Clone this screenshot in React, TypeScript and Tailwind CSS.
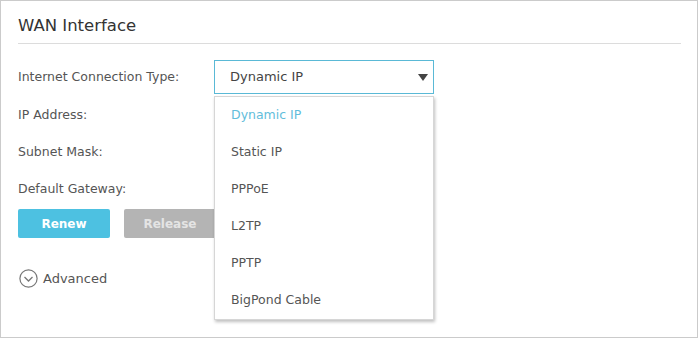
const options = ["Dynamic IP", "Static IP", "PPPoE", "L2TP", "PPTP", "BigPond Cable"];

const font = { fontFamily: '"DejaVu Sans", Verdana, sans-serif' };

export default function App() {
  return (
    <div
      className="relative w-[698px] h-[338px] bg-white border border-[#cbcbcb] overflow-hidden"
      style={font}
    >
      <div className="pl-[17px] pr-[16px]">
        <h1 className="pt-[15px] pb-[7px] text-[16.5px] leading-[20px] text-[#333]">WAN Interface</h1>
        <div className="h-px bg-[#dcdcdc]" />

        <div className="flex items-center mt-[16px] h-[34px]">
          <div className="w-[196px] text-[12.5px] text-[#555]">Internet Connection Type:</div>
          <div className="relative w-[220px] h-[34px] border border-[#5ab9d6] bg-white flex items-center pl-[15px]">
            <span className="text-[13px] text-[#444]">Dynamic IP</span>
            <svg className="absolute right-[4px] top-[12px]" width="12" height="9" viewBox="0 0 12 9">
              <path d="M1 1 L11 1 L6 8 Z" fill="#444" />
            </svg>
          </div>
        </div>

        <div className="flex flex-col">
          <div className="h-[37px] flex items-center mt-[3px] text-[12.5px] text-[#555]">IP Address:</div>
          <div className="h-[37px] flex items-center text-[12.5px] text-[#555]">Subnet Mask:</div>
          <div className="h-[37px] flex items-center text-[12.5px] text-[#555]">Default Gateway:</div>
        </div>

        <div className="flex gap-[14px] mt-[1px]">
          <button className="w-[92px] h-[29px] rounded-[2px] bg-[#4dc1e1] text-white text-[12px] font-bold">Renew</button>
          <button className="w-[92px] h-[29px] rounded-[2px] bg-[#b4b4b4] text-[#e4e4e4] text-[12px] font-bold">Release</button>
        </div>

        <div className="flex items-center gap-[5px] mt-[31px] ml-[1px]">
          <svg width="19" height="19" viewBox="0 0 19 19">
            <circle cx="9.5" cy="9.5" r="8.6" fill="none" stroke="#777" strokeWidth="1.2" />
            <path d="M5.5 8 L9.5 12 L13.5 8" fill="none" stroke="#777" strokeWidth="1.3" />
          </svg>
          <span className="text-[13px] text-[#555]">Advanced</span>
        </div>
      </div>

      <ul className="absolute left-[213px] top-[95px] w-[220px] bg-white border border-[#d6d6d6] shadow-[1px_2px_3px_rgba(0,0,0,0.25)]">
        {options.map((o, i) => (
          <li
            key={o}
            className={
              "h-[37px] flex items-center pl-[16px] text-[12.5px] " +
              (i === 0 ? "text-[#62bddb]" : "text-[#555]")
            }
          >
            {o}
          </li>
        ))}
      </ul>
    </div>
  );
}
